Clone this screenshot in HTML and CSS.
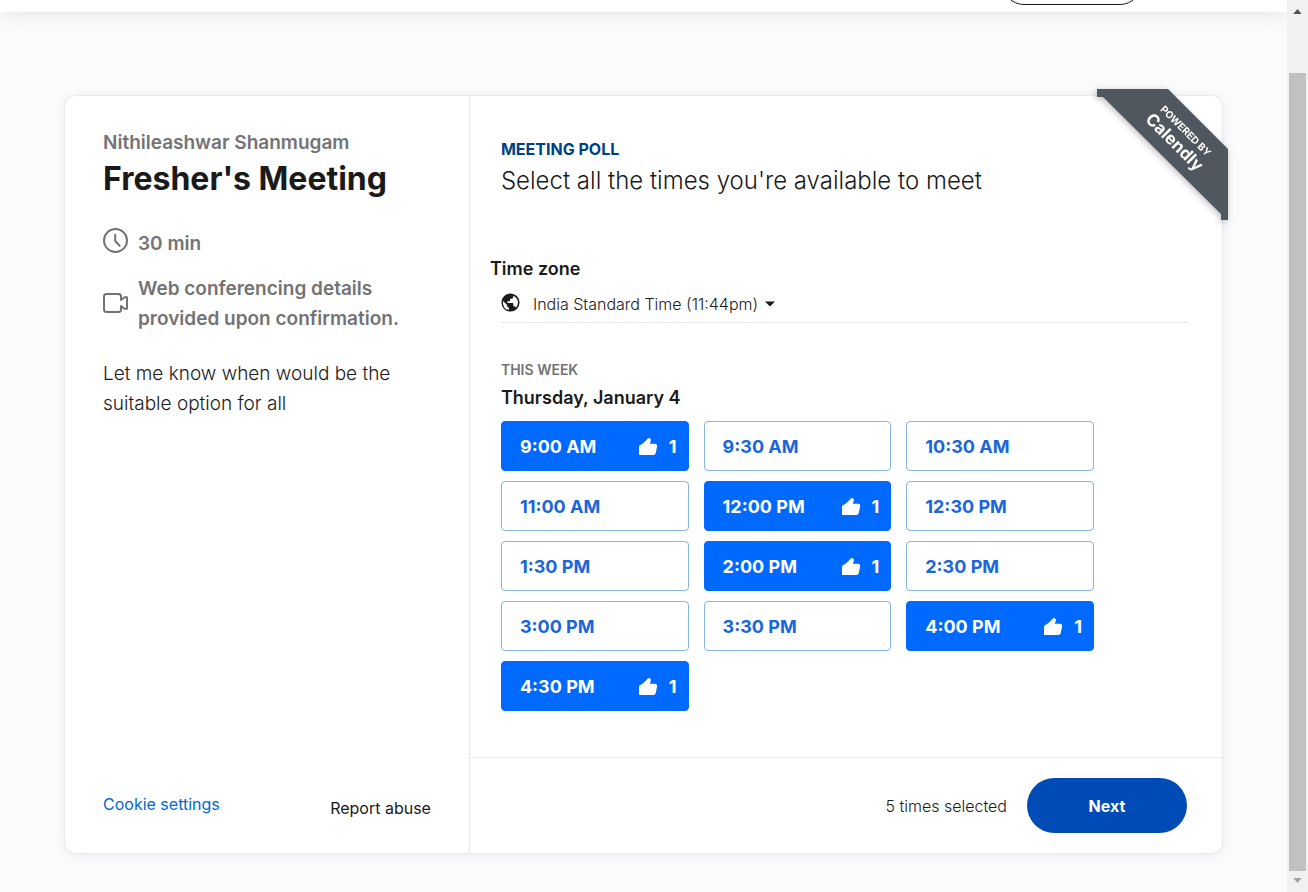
FILE: index.html
```html
<!DOCTYPE html>
<html lang="en">
<head>
<meta charset="utf-8">
<title>Fresher's Meeting</title>
<link rel="stylesheet" href="styles.css">
</head>
<body>
<svg width="0" height="0" class="sprite" aria-hidden="true">
  <symbol id="thumb" viewBox="0 0 20 20">
    <path d="M1 10Q1 8.500 2.300 8Q5 6.500 7 4.500L9.800 1.400Q11 .4 12.200 1.500Q13.300 2.500 12.800 4L11.800 6.800H17.300Q19.400 7 19.200 9L17.800 16Q17.200 18 15.200 18H1Z"/>
  </symbol>
</svg>
<div class="page">
  <header class="topbar"><button class="topbar-button" type="button" aria-label="Account"></button></header>
  <main class="main">
    <div class="card">
      <section class="details">
        <p class="host">Nithileashwar Shanmugam</p>
        <h1 class="title">Fresher's Meeting</h1>
        <div class="fact duration">
          <svg class="clock" viewBox="0 0 25 25" aria-hidden="true"><circle cx="12.500" cy="12.500" r="11.500"/><path d="M12.200 6.800V13L16.600 17.800"/></svg>
          <span>30 min</span>
        </div>
        <div class="fact conference">
          <svg class="camera" viewBox="0 0 25 20" aria-hidden="true"><path d="M18 7V3.500Q18 1 15.500 1H3.500Q1 1 1 3.500V16.500Q1 19 3.500 19H15.500Q18 19 18 16.500V13L21.500 15.800H24V4.200H21.500L18 7"/></svg>
          <span>Web conferencing details provided upon confirmation.</span>
        </div>
        <p class="note">Let me know when would be the suitable option for all</p>
        <footer class="details-footer">
          <a class="cookie" href="#cookies">Cookie settings</a>
          <a class="report" href="#report">Report abuse</a>
        </footer>
      </section>
      <section class="poll">
        <div class="poll-body">
          <h2 class="poll-label">MEETING POLL</h2>
          <p class="poll-heading">Select all the times you're available to meet</p>
          <div class="timezone">
            <label class="timezone-label" for="tz">Time zone</label>
            <div class="timezone-row">
              <svg class="globe" viewBox="0 0 20 20" aria-hidden="true"><circle cx="10" cy="10" r="9.500"/><path class="globe-sea" d="M12.800 2.800Q17.800 4.800 17.900 10Q17.800 13.200 15.800 15.400Q15.300 14 13.900 14H13V11.300Q13 10.500 12.200 10.500H6.800V8.700H8.600Q9.500 8.700 9.500 7.800V6H11.300Q12.800 6 12.800 4.300Z M2.200 8.300L6.400 12.500V13.400Q6.400 15 8.200 15.200V17.900Q2.200 16.800 2 10Z"/></svg>
              <select id="tz" class="timezone-select"><option>India Standard Time (11:44pm)</option></select>
              <svg class="caret" viewBox="0 0 10 6" aria-hidden="true"><path d="M0 .5H10L5 5.500Z"/></svg>
            </div>
          </div>
          <p class="week">THIS WEEK</p>
          <h3 class="day">Thursday, January 4</h3>
          <div class="slots">
            <button class="slot" type="button" aria-pressed="true">9:00 AM<span class="votes"><svg class="thumb"><use href="#thumb"/></svg>1</span></button>
            <button class="slot" type="button" aria-pressed="false">9:30 AM</button>
            <button class="slot" type="button" aria-pressed="false">10:30 AM</button>
            <button class="slot" type="button" aria-pressed="false">11:00 AM</button>
            <button class="slot" type="button" aria-pressed="true">12:00 PM<span class="votes"><svg class="thumb"><use href="#thumb"/></svg>1</span></button>
            <button class="slot" type="button" aria-pressed="false">12:30 PM</button>
            <button class="slot" type="button" aria-pressed="false">1:30 PM</button>
            <button class="slot" type="button" aria-pressed="true">2:00 PM<span class="votes"><svg class="thumb"><use href="#thumb"/></svg>1</span></button>
            <button class="slot" type="button" aria-pressed="false">2:30 PM</button>
            <button class="slot" type="button" aria-pressed="false">3:00 PM</button>
            <button class="slot" type="button" aria-pressed="false">3:30 PM</button>
            <button class="slot" type="button" aria-pressed="true">4:00 PM<span class="votes"><svg class="thumb"><use href="#thumb"/></svg>1</span></button>
            <button class="slot" type="button" aria-pressed="true">4:30 PM<span class="votes"><svg class="thumb"><use href="#thumb"/></svg>1</span></button>
          </div>
        </div>
        <footer class="poll-footer">
          <span>5 times selected</span>
          <button class="next" type="button">Next</button>
        </footer>
      </section>
      <svg class="ribbon" viewBox="0 0 131 131">
        <path d="M0 0H71L131 60V131H124V125L6 8H0Z"/>
        <g transform="translate(89 43) rotate(45)">
          <text class="ribbon-small" x="-1" y="3">POWERED BY</text>
          <text class="ribbon-name" x="-1" y="21">Calendly</text>
        </g>
      </svg>
    </div>
  </main>
</div>
<div class="scrollbar" aria-hidden="true">
  <svg class="arrow arrow-up" viewBox="0 0 10 6"><path d="M0 6L5 0L10 6Z"/></svg>
  <div class="scroll-thumb"></div>
  <svg class="arrow arrow-down" viewBox="0 0 10 6"><path d="M0 0L5 6L10 0Z"/></svg>
</div>
</body>
</html>
```
FILE: styles.css
```css
* { box-sizing: border-box; }
body {
  margin: 0;
  min-height: 100vh;
  display: flex;
  font-family: Inter, "Liberation Sans", sans-serif;
  color: #1a1a1a;
  background: #fafbfd;
}
p, h1, h2, h3 { margin: 0; }
button, select { font-family: inherit; }
.sprite { position: absolute; }
.page { flex: 1; min-width: 0; display: flex; flex-direction: column; }
.topbar {
  height: 12px;
  padding: 0 145px 7px 0;
  display: flex;
  justify-content: flex-end;
  align-items: flex-end;
  background: #fff;
  box-shadow: 0 2px 18px rgba(0, 0, 0, .11);
  clip-path: inset(0 0 -30px 0);
}
.topbar-button {
  flex: none;
  width: 140px;
  height: 44px;
  border: 1px solid #1a1a1a;
  border-radius: 22px;
  background: #fff;
}
.main { flex: 1; display: flex; padding: 84px 65px 39px; }
.card {
  position: relative;
  flex: 1;
  display: grid;
  grid-template-columns: 35fr 65fr;
  background: #fff;
  border-radius: 10px;
  box-shadow: 0 0 0 1px #e9ebee, 0 1px 12px rgba(0, 0, 0, .08);
}
.details {
  display: flex;
  flex-direction: column;
  padding: 35px 38px 29px;
  border-right: 1px solid #e7e7ea;
}
.host { font-size: 19px; line-height: 24px; font-weight: 600; color: #737373; }
.title { font-size: 32px; line-height: 48px; font-weight: 700; }
.fact {
  display: flex;
  align-items: center;
  gap: 10px;
  font-size: 19px;
  line-height: 30px;
  font-weight: 600;
  color: #737373;
}
.duration { margin-top: 25px; }
.conference { margin-top: 15px; }
.fact svg { flex: none; width: 25px; fill: none; stroke: #737373; stroke-width: 2; stroke-linejoin: round; stroke-linecap: round; }
.clock { height: 25px; margin-bottom: 6px; }
.camera { height: 20px; margin-bottom: 2px; }
.note { margin-top: 25px; font-size: 19px; line-height: 30px; font-weight: 300; }
.details-footer {
  margin-top: auto;
  display: flex;
  justify-content: space-between;
  align-items: center;
  font-size: 16px;
  line-height: 24px;
}
.cookie { padding-bottom: 8px; color: #0069d1; text-decoration: none; }
.report { color: #1a1a1a; text-decoration: none; }
.poll { display: flex; flex-direction: column; min-width: 0; }
.poll-body { flex: 1; padding: 41px 33px 46px 31px; }
.poll-label { font-size: 16px; line-height: 24px; font-weight: 700; color: #004186; }
.poll-heading { font-size: 24px; line-height: 40px; font-weight: 300; }
.timezone { margin: 56px 0 35px; }
.timezone-label { display: block; margin-left: -11px; font-size: 18px; line-height: 24px; font-weight: 600; }
.timezone-row {
  display: flex;
  align-items: center;
  margin-top: 4px;
  height: 38px;
  border-bottom: 1px solid #e7e7ea;
}
.globe { width: 19px; height: 19px; margin: 0 13px 3px 0; fill: #1a1a1a; }
.globe .globe-sea { fill: #fff; }
.timezone-select {
  appearance: none;
  border: 0;
  padding: 0;
  margin-right: 6px;
  background: none;
  color: #1a1a1a;
  font-size: 16px;
  line-height: 24px;
  font-weight: 300;
}
.caret { width: 10px; height: 6px; fill: #1a1a1a; }
.week { font-size: 14px; line-height: 24px; font-weight: 600; color: #737373; }
.day { font-size: 18px; line-height: 32px; font-weight: 600; }
.slots {
  display: grid;
  grid-template-columns: repeat(3, 1fr);
  gap: 10px 15px;
  max-width: 593px;
  margin-top: 7px;
}
.slot {
  display: flex;
  align-items: center;
  justify-content: space-between;
  height: 50px;
  padding: 2px 11px 0 18px;
  border: 1px solid #86b3e0;
  border-radius: 4px;
  background: #fff;
  color: #1a66da;
  font-size: 18px;
  line-height: 24px;
  font-weight: 700;
}
.slot[aria-pressed="true"] { background: #0069ff; border-color: #0069ff; color: #fff; }
.votes { display: flex; align-items: center; gap: 11px; }
.thumb { width: 20px; height: 20px; fill: #fff; }
.poll-footer {
  display: flex;
  justify-content: flex-end;
  align-items: center;
  gap: 20px;
  padding: 20px 35px;
  border-top: 1px solid #e7e7ea;
  font-size: 16px;
  font-weight: 300;
}
.next {
  width: 160px;
  height: 55px;
  border: 0;
  border-radius: 28px;
  background: #004bb5;
  color: #fff;
  font-size: 16px;
  font-weight: 700;
}
.ribbon {
  position: absolute;
  top: -7px;
  right: -6px;
  width: 131px;
  height: 131px;
  fill: #50575e;
  filter: drop-shadow(-1px 2px 3px rgba(0, 0, 0, .25));
}
.ribbon text { fill: #fff; text-anchor: middle; font-weight: 700; }
.ribbon-small { font-size: 10px; }
.ribbon-name { font-size: 17px; }
.scrollbar {
  flex: none;
  width: 21px;
  display: flex;
  flex-direction: column;
  align-items: center;
  background: #f1f1f1;
}
.arrow { width: 9px; height: 5px; }
.arrow-up { margin: 9px 0 59px; fill: #505050; }
.arrow-down { margin: 7px 0 9px; fill: #a0a0a0; }
.scroll-thumb { flex: 1; width: 17px; background: #c1c1c1; }
```
